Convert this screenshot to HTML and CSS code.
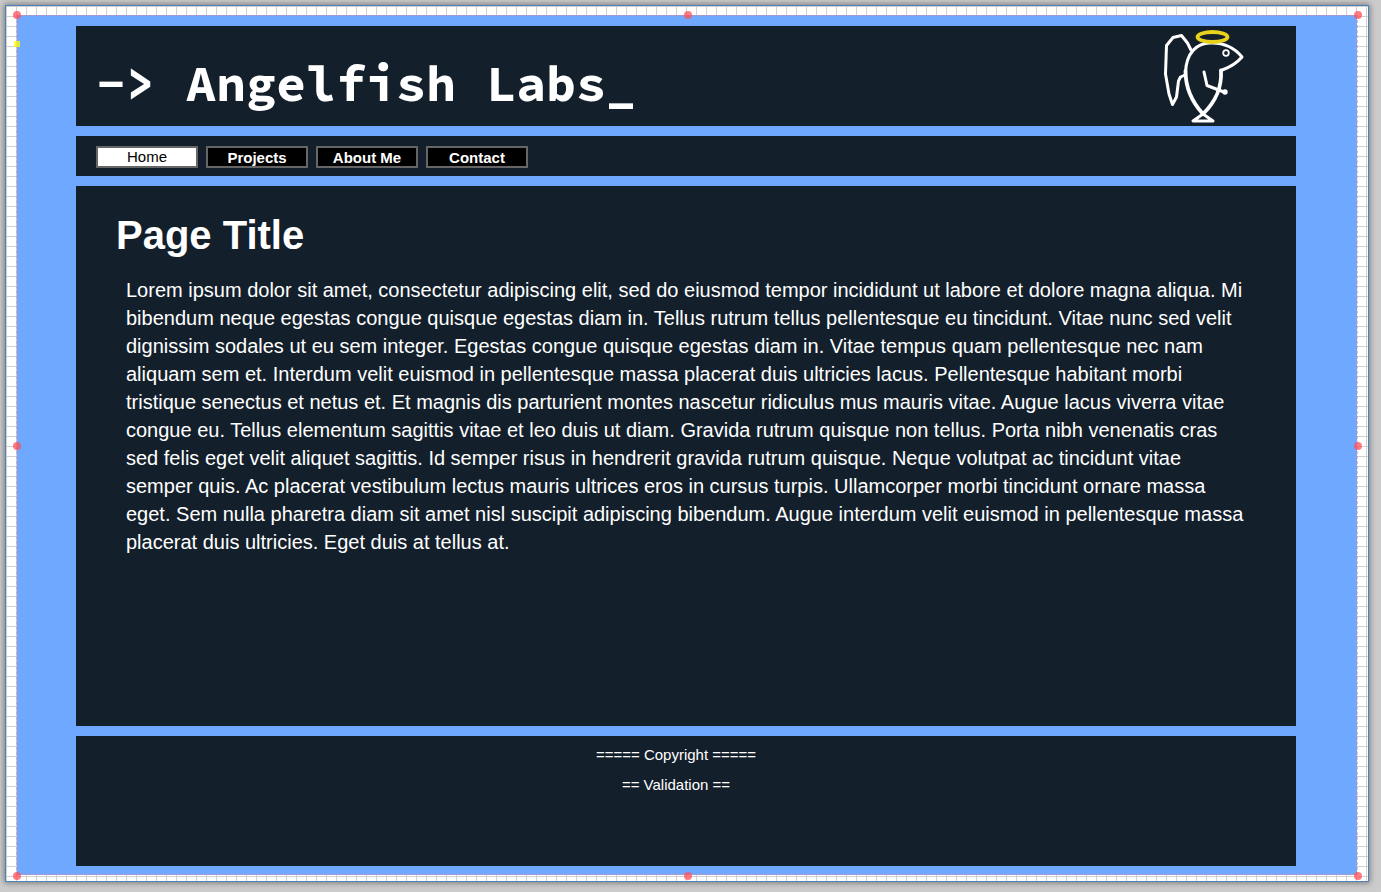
FILE: index.html
```html
<!DOCTYPE html>
<html lang="en">
<head>
<meta charset="utf-8">
<title>Angelfish Labs</title>
<link rel="stylesheet" href="styles.css">
</head>
<body>
<div class="sheet">
  <div class="page">
    <header class="panel header">
      <div class="brand">-&gt; Angelfish Labs_</div>
      <svg class="logo" viewBox="0 0 90 98" fill="none" stroke="#fff" stroke-width="3" stroke-linecap="round" stroke-linejoin="round" role="img" aria-label="Angelfish with a halo">
        <path d="M34 23 L30.500 16 L24.500 8.500 L16 10.500 L9.500 18.500 L8.500 47 L12 67 L15.500 77.500 L19.500 70 L21.500 54 L23.500 50 L28 48"/>
        <path d="M64 43.500 C74 40 80 36 85 30 C76 19 66 16 55 16 C40 15 29 26 28.500 46"/>
        <path d="M28.500 44 C28.500 61 35 75 46 87 C59 74 65 61 64 43.500" stroke-width="3.800"/>
        <path d="M46 87 L36 94 L56 94 Z"/>
        <path d="M47 45 L50 58.500 L67 65"/>
        <circle cx="68" cy="65" r="1.200"/>
        <circle cx="69" cy="26" r="2.800" stroke-width="1.800"/>
        <ellipse cx="55.500" cy="10" rx="15" ry="5" stroke="#e8d21d" stroke-width="3.800"/>
      </svg>
    </header>
    <nav class="panel nav" aria-label="Main">
      <button class="tab current" type="button">Home</button>
      <button class="tab" type="button">Projects</button>
      <button class="tab" type="button">About Me</button>
      <button class="tab" type="button">Contact</button>
    </nav>
    <main class="panel content">
      <h1 class="title">Page Title</h1>
      <p class="text">Lorem ipsum dolor sit amet, consectetur adipiscing elit, sed do eiusmod tempor incididunt ut labore et dolore magna aliqua. Mi bibendum neque egestas congue quisque egestas diam in. Tellus rutrum tellus pellentesque eu tincidunt. Vitae nunc sed velit dignissim sodales ut eu sem integer. Egestas congue quisque egestas diam in. Vitae tempus quam pellentesque nec nam aliquam sem et. Interdum velit euismod in pellentesque massa placerat duis ultricies lacus. Pellentesque habitant morbi tristique senectus et netus et. Et magnis dis parturient montes nascetur ridiculus mus mauris vitae. Augue lacus viverra vitae congue eu. Tellus elementum sagittis vitae et leo duis ut diam. Gravida rutrum quisque non tellus. Porta nibh venenatis cras sed felis eget velit aliquet sagittis. Id semper risus in hendrerit gravida rutrum quisque. Neque volutpat ac tincidunt vitae semper quis. Ac placerat vestibulum lectus mauris ultrices eros in cursus turpis. Ullamcorper morbi tincidunt ornare massa eget. Sem nulla pharetra diam sit amet nisl suscipit adipiscing bibendum. Augue interdum velit euismod in pellentesque massa placerat duis ultricies. Eget duis at tellus at.</p>
    </main>
    <footer class="panel footer">
      <p class="note">===== Copyright =====</p>
      <p class="note">== Validation ==</p>
    </footer>
    <span class="handle top left"></span>
    <span class="handle top center"></span>
    <span class="handle top right"></span>
    <span class="handle middle left"></span>
    <span class="handle middle right"></span>
    <span class="handle bottom left"></span>
    <span class="handle bottom center"></span>
    <span class="handle bottom right"></span>
    <span class="anchor"></span>
  </div>
</div>
</body>
</html>
```
FILE: styles.css
```css
* {
  box-sizing: border-box;
}

body {
  margin: 0;
  padding: 5px 12px 10px 5px;
  min-height: 100vh;
  display: flex;
  background: #cccccc;
  color: #ffffff;
  font-family: "Liberation Sans", Arial, sans-serif;
}

/* Drawing sheet with a 10px grid */
.sheet {
  flex: 1;
  display: flex;
  padding: 9px 11px 6px;
  border: 1px solid #4d82b8;
  background-color: #ffffff;
  background-image:
    linear-gradient(to right, #d0d0d0 1px, transparent 1px),
    linear-gradient(to bottom, #d0d0d0 1px, transparent 1px);
  background-size: 10px 10px;
  box-shadow: 0 0 6px 1px rgba(0, 0, 0, 0.4);
}

.page {
  position: relative;
  flex: 1;
  display: flex;
  flex-direction: column;
  gap: 10px;
  padding: 11px 61px 9px 59px;
  background: #6ea8ff;
}

/* Dashed selection frame */
.page::before {
  content: "";
  position: absolute;
  inset: 0 -1px 0 -1px;
  border: 1px dashed rgba(255, 130, 140, 0.6);
}

.panel {
  background: #141f2c;
}

.header {
  display: flex;
  justify-content: space-between;
  align-items: center;
  height: 100px;
  padding: 0 49px 0 20px;
}

.brand {
  padding-top: 15px;
  font: bold 50px/60px "Source Code Pro", "DejaVu Sans Mono", monospace;
  white-space: pre;
}

.logo {
  width: 90px;
  height: 98px;
}

.nav {
  display: flex;
  gap: 8px;
  padding: 10px 20px;
  height: 40px;
}

.tab {
  width: 102px;
  height: 22px;
  padding: 1px 0 0;
  border: 2px solid #666666;
  background: #000000;
  color: #ffffff;
  font: bold 15px/18px "Liberation Sans", Arial, sans-serif;
}

.tab.current {
  padding: 0;
  background: #ffffff;
  color: #000000;
  font-weight: normal;
}

.content {
  flex: 1;
  padding: 24px 40px;
}

.title {
  margin: 0 0 16px;
  font-size: 40px;
  line-height: 50px;
}

.text {
  margin: 0;
  padding: 0 10px;
  font-size: 20px;
  line-height: 28px;
}

.footer {
  height: 130px;
  padding: 4px 20px 0 0;
  text-align: center;
}

.note {
  margin: 0;
  font-size: 15px;
  line-height: 30px;
}

.handle {
  position: absolute;
  width: 8px;
  height: 8px;
  border-radius: 50%;
  background: rgba(255, 80, 90, 0.75);
}

.top { top: -4px; }
.middle { top: calc(50% - 3px); }
.bottom { bottom: -5px; }
.left { left: -4px; }
.center { left: calc(50% - 3px); }
.right { right: -5px; }

.anchor {
  position: absolute;
  top: 26px;
  left: -3px;
  width: 6px;
  height: 6px;
  background: rgba(255, 255, 0, 0.75);
}
```
